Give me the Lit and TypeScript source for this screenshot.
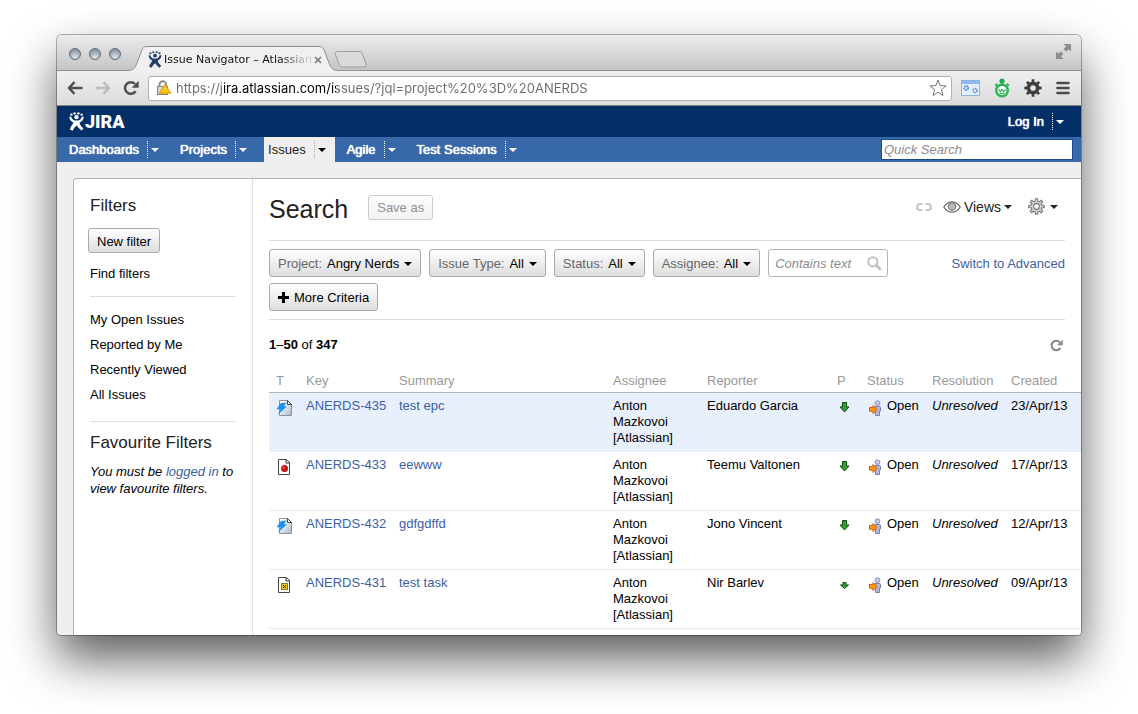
import { LitElement, html, svg, css } from "lit";
import { customElement, property } from "lit/decorators.js";

const reload = (size: number, color: string) => html`
  <svg width=${size} height=${size} viewBox="0 0 16 16" fill="none" aria-hidden="true">
    <path d="M12.600 11.200A5.800 5.800 0 1 1 12 4" stroke=${color} stroke-width="2.500" />
    <path d="M15.600 .8v7H8.600z" fill=${color} />
  </svg>`;

const charlie = (w: number, h: number, color: string) => html`
  <svg width=${w} height=${h} viewBox="0 0 15 19" aria-hidden="true">
    <g fill=${color}>
      <circle cx="2.400" cy="2.600" r="1.200" /><circle cx="5.600" cy="1.400" r="1.200" />
      <circle cx="9.400" cy="1.400" r="1.200" /><circle cx="12.600" cy="2.600" r="1.200" />
      <circle cx="7.500" cy="5.200" r="2.100" />
      <path d="M.2 5 2 4.400C3 7.400 5 8.600 7.500 8.600s4.500-1.200 5.500-4.200l1.800.6c-.5 3.400-2.400 4.800-4.200 5.600.2 2.400 1.700 4.200 3.900 5.800l-2 2.200C10.500 17 8.800 15.400 7.800 13.600 6.400 14.600 4.800 16.400 3.600 18.800L.8 17.400c1-2.800 3-5 3.600-6.800C2.600 9.800.7 8.400.2 5z" />
    </g>
  </svg>`;

const gearTeeth = (n: number, inner: number, outer: number) => {
  const pts: string[] = [];
  for (let i = 0; i < n; i++) {
    const steps: [number, number][] = [[-0.3, inner], [-0.19, outer], [0.19, outer], [0.3, inner]];
    for (const [o, r] of steps) {
      const a = ((i + o) / n) * Math.PI * 2;
      pts.push(`${(8 + Math.cos(a) * r).toFixed(2)} ${(8 + Math.sin(a) * r).toFixed(2)}`);
    }
  }
  return "M" + pts.join("L") + "z";
};

const pageShape = svg`
  <path d="M2.500 .5h8l3 3v12h-11z" fill="#fff" stroke="#444" />
  <path d="M10 .5v3.500h3.500" fill="none" stroke="#333" />`;

const typeIcon = (type: string) => {
  if (type === "Epic")
    return html`<svg width="16" height="16" viewBox="0 0 16 16" role="img" aria-label="Epic">
      <defs><linearGradient id="pg" x1="0" y1="0" x2="1" y2="1"><stop offset="0.2" stop-color="#fff" /><stop offset="1" stop-color="#a9b6c6" /></linearGradient></defs>
      <path d="M3.500 .5h8l4 4v11h-12z" fill="url(#pg)" stroke="#8d9299" />
      <path d="M11.500 .5v4h4z" fill="#fff" stroke="#444" />
      <path d="M5 3 10.500 2.500 8 6.200l3 .3L2 14.500l2.600-5.300H.4z" fill="#1e90f5" />
    </svg>`;
  if (type === "Bug")
    return html`<svg width="16" height="16" viewBox="0 0 16 16" role="img" aria-label="Bug">
      ${pageShape}<circle cx="8.500" cy="9.500" r="3.500" fill="#c31414" /><circle cx="7.600" cy="8.600" r="1.200" fill="#e65a5a" /></svg>`;
  return html`<svg width="16" height="16" viewBox="0 0 16 16" role="img" aria-label="Task">
    ${pageShape}<rect x="5.500" y="6.500" width="6" height="6" fill="#f6cd1c" stroke="#8a7322" />
    <path d="M7 8 10 11M10 8 7 11" stroke="#222" /></svg>`;
};

@customElement("drop-caret")
class DropCaret extends LitElement {
  static styles = css`
    :host { display: block; width: 8px; height: 4px; }
    svg { display: block; }
  `;
  render() {
    return html`<svg width="8" height="4" viewBox="0 0 8 4" aria-hidden="true"><path d="M0 0h8L4 4z" fill="currentColor" /></svg>`;
  }
}

@customElement("browser-chrome")
class BrowserChrome extends LitElement {
  static styles = css`
    :host { display: block; font-family: "DejaVu Sans", sans-serif; }
    button { border: 0; background: none; padding: 0; margin: 0; display: block; }
    svg { display: block; }
    .titlebar { display: flex; align-items: flex-end; height: 35px; border-bottom: 1px solid #8f8f8f; box-sizing: content-box;
      background: linear-gradient(#ececec, #c5c5c5); }
    .lights { display: flex; gap: 8px; padding: 0 7px 10px 12px; }
    .light { width: 12px; height: 12px; border-radius: 50%; box-sizing: border-box; border: 1px solid #626a72;
      background: radial-gradient(circle at 50% 85%, #dde6ed, #8b98a4 75%); }
    .tab { display: grid; width: 210px; height: 25px; margin-bottom: -1px; }
    .tab > * { grid-area: 1 / 1; }
    .tabline { display: flex; align-items: center; padding: 2px 0 0 20px; gap: 2px; }
    .tabtitle { white-space: nowrap; width: 148px; font-size: 11px; line-height: 16px; color: transparent;
      background: linear-gradient(90deg, #111 116px, #c8c8c8 142px); -webkit-background-clip: text; background-clip: text; }
    .newtab { margin-left: -4px; padding-bottom: 2px; }
    .full { margin-left: auto; padding: 0 10px 11px 0; }
    .toolbar { display: flex; align-items: center; height: 34px; padding: 0 11px 0 10px; border-bottom: 1px solid #858585;
      background: linear-gradient(#efefef, #dcdcdc); }
    .moves { display: flex; gap: 12px; margin-right: 9px; align-items: center; }
    .omni { flex: 1; min-width: 0; display: flex; align-items: center; gap: 4px; height: 25px; box-sizing: border-box; padding: 0 4px 0 7px;
      border: 1px solid #b0b0b0; border-radius: 3px; background: #fff; }
    .url { flex: 1; min-width: 0; border: 0; padding: 0; outline: 0; font: 13px/18px Inter, sans-serif; color: transparent;
      background: linear-gradient(90deg, #6a6a6a 48px, #000 48px, #000 160px, #6a6a6a 160px); -webkit-background-clip: text; background-clip: text; }
    .ext { display: flex; align-items: center; gap: 14px; margin-left: 9px; }
  `;
  render() {
    return html`
      <div class="titlebar">
        <div class="lights">
          <button class="light" aria-label="Close"></button><button class="light" aria-label="Minimise"></button><button class="light" aria-label="Zoom"></button>
        </div>
        <div class="tab">
          <svg width="210" height="25" viewBox="0 0 210 25">
            <path d="M0 24.500C6 24 7 22 9 17L13.500 5C15 1.500 16 .5 19 .5h172c3 0 4 1 5.500 4.500L201 17c2 5 3 7 9 7.500V25H0z" fill="#f0f0f0" />
            <path d="M0 24.500C6 24 7 22 9 17L13.500 5C15 1.500 16 .5 19 .5h172c3 0 4 1 5.500 4.500L201 17c2 5 3 7 9 7.500" fill="none" stroke="#8f8f8f" />
          </svg>
          <div class="tabline">
            ${charlie(14, 17, "#1f3f6b")}
            <span class="tabtitle">Issue Navigator – Atlassian</span>
            <button aria-label="Close tab"><svg width="8" height="8" viewBox="0 0 8 8"><path d="M1 1l6 6M7 1 1 7" stroke="#7b7b7b" stroke-width="1.700" /></svg></button>
          </div>
        </div>
        <button class="newtab" aria-label="New tab">
          <svg width="33" height="17" viewBox="0 0 33 17"><path d="M4 .5h21c2.500 0 3 1 3.500 2.500L32 13c.6 2-.5 3-2 3H8.500C7 16 6 15.500 5.200 13.500L1.200 3C.6 1.500 1.500 .5 4 .5z" fill="#d9d9d9" stroke="#9b9b9b" /></svg>
        </button>
        <button class="full" aria-label="Full screen">
          <svg width="15" height="15" viewBox="0 0 15 15" fill="#8d8d8d"><path d="M7.500 0H15v7.500l-2.300-2.300-2.500 2.500-2.600-2.600 2.500-2.500zM0 7.500l2.300 2.300 2.500-2.500 2.600 2.600-2.500 2.500L7.500 15H0z" /></svg>
        </button>
      </div>
      <div class="toolbar">
        <div class="moves">
          <button aria-label="Back"><svg width="16" height="14" viewBox="0 0 16 14" fill="none" stroke="#505050" stroke-width="2.400"><path d="M7.500 1.200 2 7l5.500 5.800M2 7h13.500" /></svg></button>
          <button aria-label="Forward"><svg width="16" height="14" viewBox="0 0 16 14" fill="none" stroke="#bdbdbd" stroke-width="2.400"><path d="M8.500 1.200 14 7l-5.500 5.800M14 7H.5" /></svg></button>
          <button aria-label="Reload">${reload(16, "#505050")}</button>
        </div>
        <div class="omni">
          <svg width="16" height="16" viewBox="0 0 16 16">
            <path d="M3.500 7V4.500a3 3 0 0 1 6.500 0V7" fill="none" stroke="#8b8b8b" stroke-width="1.800" />
            <rect x="1.500" y="6.500" width="10" height="8" fill="#d8d8d8" stroke="#858585" />
            <path d="M9 4.500 14.800 13.200H3.200z" fill="#fdc911" stroke="#d99a00" stroke-linejoin="round" />
          </svg>
          <input class="url" aria-label="Address" spellcheck="false" value="https://jira.atlassian.com/issues/?jql=project%20%3D%20ANERDS" />
          <button aria-label="Bookmark"><svg width="18" height="18" viewBox="0 0 18 18"><path d="M9 1l2.100 5.600 6 .3-4.700 3.700 1.600 5.900L9 13.200l-5 3.300 1.600-5.900L.9 6.900l6-.3z" fill="#fff" stroke="#767676" stroke-linejoin="round" /></svg></button>
        </div>
        <div class="ext">
          <button aria-label="Page settings"><svg width="19" height="16" viewBox="0 0 19 16">
            <rect x=".5" y=".5" width="18" height="15" fill="#e4effb" stroke="#8db2e2" /><rect x="1" y="1" width="17" height="3" fill="#8fb9ef" />
            <circle cx="5.200" cy="8" r="2" fill="none" stroke="#5b93dc" stroke-width="1.800" stroke-dasharray="1.500 .6" /><circle cx="14" cy="10.500" r="2" fill="none" stroke="#5b93dc" stroke-width="1.600" stroke-dasharray="1.500 .6" /></svg></button>
          <button aria-label="Stopwatch"><svg width="16" height="20" viewBox="0 0 16 20">
            <circle cx="8" cy="12.500" r="5.800" fill="#fff" stroke="#2eb556" stroke-width="2.400" /><circle cx="8" cy="3" r="2.600" fill="#2ea44f" /><path d="M6.500 4h3v3h-3zM.6 6.500 3 5l1 2.500-2 1.500zM15.400 6.500 13 5l-1 2.500 2 1.500z" fill="#2eb556" />
            <path d="M4.500 11.500 6.500 13.500 8 11.500 9.500 13.500 11.500 11.500M5.500 15q2.500 1.500 5 0" fill="none" stroke="#2eb556" stroke-width="1.200" /></svg></button>
          <button aria-label="Settings"><svg width="18" height="18" viewBox="0 0 16 16"><path d=${gearTeeth(8, 5.4, 7.8)} fill="#3d3d3d" /><circle cx="8" cy="8" r="5.600" fill="#3d3d3d" /><circle cx="8" cy="8" r="2.500" fill="#e4e4e4" /></svg></button>
          <button aria-label="Menu"><svg width="14" height="14" viewBox="0 0 14 14" stroke="#4a4a4a" stroke-width="2.600" stroke-linecap="round"><path d="M1.500 2h11M1.500 7h11M1.500 12h11" /></svg></button>
        </div>
      </div>`;
  }
}

@customElement("jira-header")
class JiraHeader extends LitElement {
  static styles = css`
    :host { display: block; font: 13px/16px "Liberation Sans", Arial, sans-serif; }
    button { border: 0; background: none; padding: 0; margin: 0; color: inherit; font: inherit; }
    svg { display: block; }
    .top { display: flex; align-items: center; justify-content: space-between; height: 31px; padding: 0 8px 0 12px; background: #033068; color: #fff; }
    .brand { display: flex; align-items: center; gap: 1px; color: #fff; text-decoration: none; font: 900 18px/20px Roboto, sans-serif; }
    .nav { display: flex; align-items: stretch; height: 25px; padding: 0 8px; background: #3668aa; color: #fff; }
    .menus { display: flex; gap: 8px; flex: 1; margin: 0; padding: 0; list-style: none; }
    .item { display: flex; align-items: center; padding: 0 9px 0 4px; }
    .link { color: inherit; text-decoration: none; text-shadow: 0 0 1px #fff, 0 0 1px #fff; }
    .more { display: flex; align-items: center; height: 17px; margin-left: 8px; padding-left: 3px; border-left: 1px dotted #fff; }
    .active { background: #efefef; color: #222; }
    .active .link { text-shadow: none; }
    .active .more { border-color: #aaa; color: #000; }
    .quick { width: 192px; height: 21px; align-self: center; box-sizing: border-box; border: 1px solid #1d4a87; padding: 0 2px; font: italic 13px/16px "Liberation Sans", Arial, sans-serif; background: #fff; color: #222; }
    .quick::placeholder { color: #8c8c8c; opacity: 1; }
  `;
  render() {
    const menus = ["Dashboards", "Projects", "Issues", "Agile", "Test Sessions"];
    return html`
      <header class="top">
        <a class="brand" href="#home">${charlie(15, 19, "#fff")}JIRA</a>
        <div class="item"><a class="link" href="#login">Log In</a><button class="more" aria-label="Account menu"><drop-caret></drop-caret></button></div>
      </header>
      <nav class="nav">
        <ul class="menus">
          ${menus.map((m) => html`<li class="item ${m === "Issues" ? "active" : ""}"><a class="link" href="#menu">${m}</a><button class="more" aria-label="${m} menu"><drop-caret></drop-caret></button></li>`)}
        </ul>
        <input class="quick" placeholder="Quick Search" aria-label="Quick Search" />
      </nav>`;
  }
}

@customElement("filter-sidebar")
class FilterSidebar extends LitElement {
  static styles = css`
    :host { display: block; flex: none; width: 179px; box-sizing: border-box; padding: 17px 16px 16px; border-right: 1px solid #ddd; }
    .title { margin: 0; font-size: 17px; line-height: 20px; font-weight: 400; color: #222; }
    .new { display: block; height: 25px; margin: 12px 0 8px -2px; padding: 2px 8px 0; border: 1px solid #a9a9a9; border-radius: 3px; font: inherit; color: #000; background: linear-gradient(#fff, #dedede); }
    .list { margin: 0; padding: 0 0 10px; list-style: none; }
    .list + .list { padding: 10px 0 14px; border-top: 1px solid #ddd; }
    .row { line-height: 25px; }
    .plain { color: #000; text-decoration: none; }
    .fav { border-top: 1px solid #ddd; padding-top: 11px; }
    .note { margin: 10px 0 0; font-style: italic; line-height: 17px; white-space: nowrap; }
    .link { color: #3b5fa3; text-decoration: none; }
  `;
  render() {
    const views = ["My Open Issues", "Reported by Me", "Recently Viewed", "All Issues"];
    return html`
      <h2 class="title">Filters</h2>
      <button class="new">New filter</button>
      <ul class="list"><li class="row"><a class="plain" href="#find">Find filters</a></li></ul>
      <ul class="list">${views.map((v) => html`<li class="row"><a class="plain" href="#view">${v}</a></li>`)}</ul>
      <div class="fav">
        <h2 class="title">Favourite Filters</h2>
        <p class="note">You must be <a class="link" href="#login">logged in</a> to<br />view favourite filters.</p>
      </div>`;
  }
}

interface Issue { type: string; key: string; summary: string; reporter: string; minor?: boolean; created: string }

@customElement("issue-table")
class IssueTable extends LitElement {
  @property({ attribute: false }) issues: Issue[] = [];
  static styles = css`
    :host { display: block; }
    svg { display: block; }
    table { width: 100%; table-layout: fixed; border-collapse: separate; border-spacing: 0; }
    .t, .p { width: 30px; }
    .key { width: 93px; }
    .assignee { width: 94px; }
    .reporter { width: 130px; }
    .status { width: 65px; }
    .resolution { width: 79px; }
    .created { width: 77px; }
    th { box-sizing: border-box; padding: 4px 7px 3px; text-align: left; font-weight: 400; color: #999; border-bottom: 1px solid #b5b5b5; }
    td { padding: 5px 0 5px 7px; vertical-align: top; border-bottom: 1px solid #ececec; }
    .picked td { background: #e9f0fd; border-color: #e9f0fd; }
    .link { color: #3b5fa3; text-decoration: none; }
    .icon { padding-top: 7px; }
    .state { display: flex; gap: 4px; }
    .man { margin-top: 2px; }
    .none { font-style: italic; }
  `;
  render() {
    return html`<table>
      <thead><tr>
        <th class="t">T</th><th class="key">Key</th><th>Summary</th><th class="assignee">Assignee</th><th class="reporter">Reporter</th>
        <th class="p">P</th><th class="status">Status</th><th class="resolution">Resolution</th><th class="created">Created</th>
      </tr></thead>
      <tbody>${this.issues.map((it, i) => html`<tr class=${i === 0 ? "picked" : ""}>
        <td class="icon">${typeIcon(it.type)}</td>
        <td><a class="link" href="#issue">${it.key}</a></td>
        <td><a class="link" href="#issue">${it.summary}</a></td>
        <td>Anton Mazkovoi [Atlassian]</td>
        <td>${it.reporter}</td>
        <td class="icon"><svg width="16" height="16" viewBox="0 0 16 16" role="img" aria-label=${it.minor ? "Minor" : "Major"}>
          ${it.minor
            ? svg`<path d="M6 5.500h3V8h2.500L7.500 11.500 3.500 8H6z" fill="#2fa32f" stroke="#0b4d0b" />`
            : svg`<path d="M5.500 2.500h4V7H12l-4.500 5L3 7h2.500z" fill="#2fa32f" stroke="#0b4d0b" />`}</svg></td>
        <td><div class="state"><svg class="man" width="16" height="16" viewBox="0 0 16 16" aria-hidden="true">
          <circle cx="10.500" cy="3.200" r="2.400" fill="#c5c8e8" stroke="#9094bd" />
          <path d="M8 6.500h4.500c.6 0 1 .4 1 1V11h-1v4.500h-4V11H8z" fill="#b3b7de" stroke="#7c80ac" />
          <path d="M2.500 7.500H6V5.500L10 9.500 6 13.500v-2.300H2.500z" fill="#ff9d12" stroke="#d45a0a" /></svg>Open</div></td>
        <td class="none">Unresolved</td>
        <td>${it.created}</td>
      </tr>`)}</tbody>
    </table>`;
  }
}

@customElement("issue-search")
class IssueSearch extends LitElement {
  static styles = css`
    :host { display: block; flex: 1; min-width: 0; padding: 15px 0 6px 16px; }
    button { margin: 0; font: inherit; }
    svg { display: block; }
    .head { display: flex; align-items: center; height: 30px; margin-right: 16px; padding-bottom: 16px; border-bottom: 1px solid #ddd; }
    .title { margin: 0 20px 0 0; font-size: 25px; line-height: 30px; font-weight: 400; color: #222; }
    .save { height: 25px; padding: 1px 8px 0; border: 1px solid #ccc; border-radius: 3px; color: #909090; background: linear-gradient(#fdfdfd, #f1f1f1); margin-bottom: 3px; }
    .tools { display: flex; align-items: center; margin: 0 7px 5px auto; }
    .tool { display: flex; align-items: center; border: 0; padding: 0; background: none; color: #222; font-size: 14px; line-height: 16px; }
    .views { margin: 0 16px 0 11px; gap: 3px; }
    .gear { gap: 5px; }
    .query { display: flex; align-items: flex-start; justify-content: space-between; margin-right: 16px; padding: 8px 0; border-bottom: 1px solid #ddd; }
    .criteria { display: flex; flex-wrap: wrap; gap: 6px 8px; max-width: 640px; }
    .pick { display: flex; align-items: center; gap: 5px; height: 28px; padding: 1px 8px 0; border: 1px solid #a9a9a9; border-radius: 3px; color: #000; background: linear-gradient(#fff, #dedede); white-space: pre; }
    .name { color: #666; margin-right: 2px; }
    .contains { display: flex; align-items: center; box-sizing: border-box; width: 120px; height: 28px; padding: 1px 5px 0 6px; border: 1px solid #b3b3b3; border-radius: 3px; background: #fff; }
    .field { flex: 1; min-width: 0; border: 0; padding: 0; outline: 0; background: none; font: italic 13px/16px "Liberation Sans", Arial, sans-serif; color: #222; }
    .field::placeholder { color: #8c8c8c; opacity: 1; }
    .advanced { color: #3b5fa3; text-decoration: none; line-height: 30px; white-space: nowrap; }
    .count { display: flex; justify-content: space-between; align-items: center; height: 16px; margin: 17px 18px 16px 0; }
  `;
  private issues: Issue[] = [
    { type: "Epic", key: "ANERDS-435", summary: "test epc", reporter: "Eduardo Garcia", created: "23/Apr/13" },
    { type: "Bug", key: "ANERDS-433", summary: "eewww", reporter: "Teemu Valtonen", created: "17/Apr/13" },
    { type: "Epic", key: "ANERDS-432", summary: "gdfgdffd", reporter: "Jono Vincent", created: "12/Apr/13" },
    { type: "Task", key: "ANERDS-431", summary: "test task", reporter: "Nir Barlev", minor: true, created: "09/Apr/13" },
  ];
  render() {
    const picks = [["Project:", "Angry Nerds"], ["Issue Type:", "All"], ["Status:", "All"], ["Assignee:", "All"]];
    return html`
      <header class="head">
        <h1 class="title">Search</h1>
        <button class="save" disabled>Save as</button>
        <div class="tools">
          <button class="tool" aria-label="Share link"><svg width="16" height="8" viewBox="0 0 16 8" fill="none" stroke="#c6c6c6" stroke-width="2"><path d="M6.500 1H4a3 3 0 0 0 0 6h2.500M9.500 1H12a3 3 0 0 1 0 6H9.500" /></svg></button>
          <button class="tool views"><svg width="18" height="12" viewBox="0 0 18 12"><path d="M.8 6C3 2.500 6 .8 9 .8S15 2.500 17.200 6C15 9.500 12 11.200 9 11.200S3 9.500 .8 6z" fill="#fff" stroke="#6e6e6e" stroke-width="1.300" /><circle cx="9" cy="5.600" r="3.800" fill="#b9b9b9" stroke="#777" /></svg>Views <drop-caret></drop-caret></button>
          <button class="tool gear" aria-label="Options"><svg width="17" height="17" viewBox="0 0 16 16"><path d=${gearTeeth(8, 5.2, 7.4)} fill="#cfcfcf" stroke="#7a7a7a" stroke-linejoin="round" /><circle cx="8" cy="8" r="2.700" fill="#fff" stroke="#7a7a7a" /></svg><drop-caret></drop-caret></button>
        </div>
      </header>
      <div class="query">
        <div class="criteria">
          ${picks.map(([n, v]) => html`<button class="pick"><span><span class="name">${n}</span> ${v}</span><drop-caret></drop-caret></button>`)}
          <label class="contains"><input class="field" placeholder="Contains text" aria-label="Contains text" />
            <svg width="15" height="15" viewBox="0 0 15 15" fill="none" stroke="#c2c2c2"><circle cx="5.800" cy="5.800" r="4.600" stroke-width="2" /><path d="m9 9 4.800 4.800" stroke-width="2.800" /></svg></label>
          <button class="pick"><svg width="11" height="11" viewBox="0 0 11 11"><path d="M4 0h3v4h4v3H7v4H4V7H0V4h4z" /></svg>More Criteria</button>
        </div>
        <a class="advanced" href="#advanced">Switch to Advanced</a>
      </div>
      <div class="count">
        <span><b>1</b>–<b>50</b> of <b>347</b></span>
        <button class="tool" aria-label="Refresh results">${reload(13, "#858585")}</button>
      </div>
      <issue-table .issues=${this.issues}></issue-table>`;
  }
}

@customElement("app-root")
class AppRoot extends LitElement {
  static styles = css`
    :host { display: flex; flex-direction: column; box-sizing: border-box; min-height: 100vh; padding: 35px 57px 79px; background: #fff; overflow: hidden;
      font: 13px/16px "Liberation Sans", Arial, sans-serif; color: #000; }
    .window { flex: 1; display: flex; flex-direction: column; overflow: hidden; border-radius: 5px 5px 4px 4px; background: #efefef;
      box-shadow: 0 0 0 1px rgba(0, 0, 0, 0.3), 0 24px 48px rgba(0, 0, 0, 0.64); }
    .panel { flex: 1; display: flex; margin: 16px 0 0 16px; border: 1px solid #b5b5b5; border-width: 1px 0 0 1px; border-top-left-radius: 4px; background: #fff; }
  `;
  render() {
    return html`<div class="window">
      <browser-chrome></browser-chrome>
      <jira-header></jira-header>
      <div class="panel"><filter-sidebar></filter-sidebar><issue-search></issue-search></div>
    </div>`;
  }
}
